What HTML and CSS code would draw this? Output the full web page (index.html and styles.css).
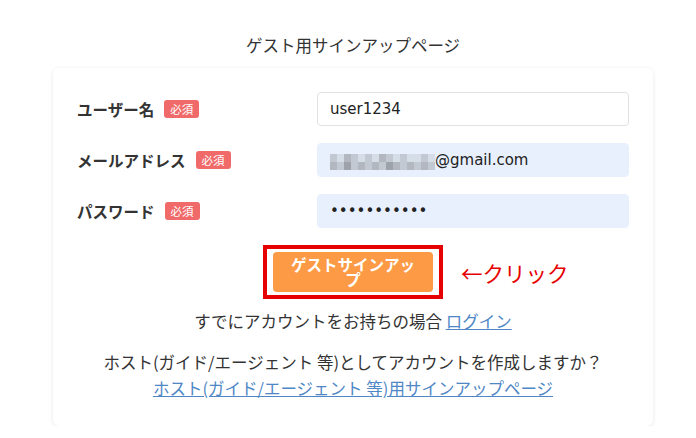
FILE: index.html
```html
<!DOCTYPE html>
<html lang="ja">

<head>
    <meta charset="UTF-8" />
    <meta name="viewport" content="width=device-width, initial-scale=1.0" />
    <title>ゲスト用サインアップページ</title>
    <link rel="stylesheet" href="styles.css">
</head>

<body>
    <div class="page">
        <h2 class="title">ゲスト用サインアップページ</h2>

        <div class="card">
            <form class="form" onsubmit="return false">
                <div class="row">
                    <label class="label">ユーザー名 <span class="badge">必須</span></label>
                    <input type="text" class="field" value="user1234">
                </div>
                <div class="row">
                    <label class="label">メールアドレス <span class="badge">必須</span></label>
                    <div class="field autofill">
                        <span class="mosaic">
                            <i class="m2"></i><i class="m1"></i><i class="m3"></i><i class="m2"></i><i class="m1"></i><i class="m2"></i><i class="m1"></i><i class="m3"></i><i class="m2"></i><i class="m1"></i><i class="m2"></i><i class="m1"></i><i class="m1"></i><i class="m2"></i><i class="m1"></i>
                            <i class="m3"></i><i class="m2"></i><i class="m4"></i><i class="m2"></i><i class="m3"></i><i class="m2"></i><i class="m3"></i><i class="m2"></i><i class="m4"></i><i class="m3"></i><i class="m2"></i><i class="m3"></i><i class="m2"></i><i class="m3"></i><i class="m2"></i>
                        </span>@gmail.com
                    </div>
                </div>
                <div class="row">
                    <label class="label">パスワード <span class="badge">必須</span></label>
                    <input type="password" class="field autofill" value="password123">
                </div>

                <div class="submit">
                    <div class="highlight">
                        <button type="submit" class="signup-btn">ゲストサインアップ</button>
                        <span class="note">←クリック</span>
                    </div>
                </div>
            </form>

            <p class="login">すでにアカウントをお持ちの場合 <a href="#">ログイン</a></p>
            <p class="host">
                ホスト(ガイド/エージェント 等)としてアカウントを作成しますか？<br>
                <a href="#">ホスト(ガイド/エージェント 等)用サインアップページ</a>
            </p>
        </div>
    </div>
</body>

</html>
```

FILE: styles.css
```css
body {
    font-family: "Noto Sans CJK JP", sans-serif;
    background-color: #ffffff;
    color: #333;
    margin: 0;
    padding: 0;
}

.page {
    width: 600px;
    margin-left: 53px;
    padding-top: 33px;
}

.title {
    font-size: 16.5px;
    font-weight: normal;
    line-height: 24px;
    text-align: center;
    margin: 0 0 11px;
}

.card {
    background-color: white;
    border-radius: 6px;
    box-shadow: 0 1px 4px rgba(0, 0, 0, 0.1);
    padding: 24px 24px 25px;
}

.form {
    margin: 0;
}

.row {
    display: flex;
    align-items: center;
    margin-bottom: 17px;
}

.label {
    width: 240px;
    font-size: 15.5px;
    font-weight: bold;
    display: flex;
    align-items: center;
    gap: 10px;
}

.badge {
    background-color: #f06a6a;
    color: white;
    font-size: 11.5px;
    font-weight: normal;
    line-height: 18px;
    padding: 0 6px;
    border-radius: 3px;
}

.field {
    flex: 1;
    box-sizing: border-box;
    height: 34px;
    padding: 0 12px;
    border: 1px solid #e2e2e2;
    border-radius: 4px;
    background-color: #fff;
    font-family: "DejaVu Sans", "Noto Sans CJK JP", sans-serif;
    font-size: 15px;
    color: #222;
    display: flex;
    align-items: center;
}

.field.autofill {
    background-color: #e8f0fe;
    border-color: #e8f0fe;
}

.mosaic {
    display: grid;
    grid-template-columns: repeat(15, 7px);
    grid-template-rows: 8px 8px;
    margin-top: 4px;
}

.mosaic i {
    display: block;
}

.m1 { background-color: #d5dde6; }
.m2 { background-color: #c3c9d2; }
.m3 { background-color: #b2b7c0; }
.m4 { background-color: #9ea3ab; }

.submit {
    display: flex;
    justify-content: center;
    margin-top: 16px;
}

.highlight {
    position: relative;
    border: 4px solid #e60000;
    padding: 3px 6px;
}

.signup-btn {
    display: block;
    width: 160px;
    height: 40px;
    padding: 0 12px;
    background-color: #fd9a46;
    color: white;
    border: none;
    border-radius: 4px;
    font-family: "Noto Sans CJK JP", sans-serif;
    font-size: 15.5px;
    font-weight: bold;
    line-height: 1;
    cursor: pointer;
}

.note {
    position: absolute;
    left: calc(100% + 22px);
    top: 50%;
    transform: translateY(-50%);
    color: #e60000;
    font-size: 21.5px;
    white-space: nowrap;
}

.login {
    text-align: center;
    font-size: 16.5px;
    line-height: 24px;
    margin: 10px 0 0;
}

.host {
    text-align: center;
    font-size: 16.5px;
    line-height: 26px;
    margin: 16px 0 0;
}

a {
    color: #4f87c6;
}
```
